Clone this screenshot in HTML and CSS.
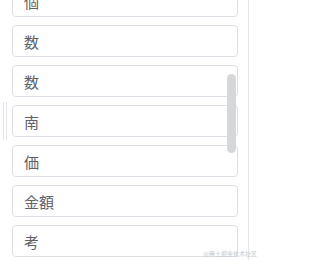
FILE: index.html
```html
<!DOCTYPE html>
<html lang="ja">
<head>
<meta charset="utf-8">
<link rel="stylesheet" href="styles.css">
</head>
<body>
<div class="panel">
  <div class="list">
    <div class="field">個</div>
    <div class="field">数</div>
    <div class="field">数</div>
    <div class="field">南</div>
    <div class="field">価</div>
    <div class="field">金額</div>
    <div class="field">考</div>
  </div>
  <div class="handle"></div>
  <div class="thumb"></div>
</div>
<div class="watermark">@稀土掘金技术社区</div>
</body>
</html>
```
FILE: styles.css
```css
html, body {
  margin: 0;
  padding: 0;
  background: #ffffff;
  overflow: hidden;
}
body {
  width: 260px;
  height: 260px;
  position: relative;
  font-family: "Noto Sans CJK JP", "Noto Sans", sans-serif;
}
.panel {
  position: relative;
  width: 248px;
  height: 260px;
  border-right: 1px solid #e4e6ea;
  overflow: hidden;
}
.list {
  display: flex;
  flex-direction: column;
  gap: 8px;
  margin-top: -15px;
  padding-left: 12px;
  width: 226px;
}
.field {
  height: 30px;
  border: 1px solid #dcdfe6;
  border-radius: 4px;
  display: flex;
  align-items: center;
  padding-left: 11px;
  font-size: 15px;
  color: #606266;
  background: #fff;
}
.handle {
  position: absolute;
  left: 3px;
  top: 102px;
  width: 2px;
  height: 38px;
  border-left: 1px solid #e4e6ea;
  border-right: 1px solid #e4e6ea;
}
.thumb {
  position: absolute;
  left: 227px;
  top: 74px;
  width: 9px;
  height: 79px;
  border-radius: 5px;
  background: #d6d7d9;
}
.watermark {
  position: absolute;
  right: 3px;
  bottom: 3px;
  font-size: 6px;
  line-height: 6px;
  color: #c8c9cc;
}
```
